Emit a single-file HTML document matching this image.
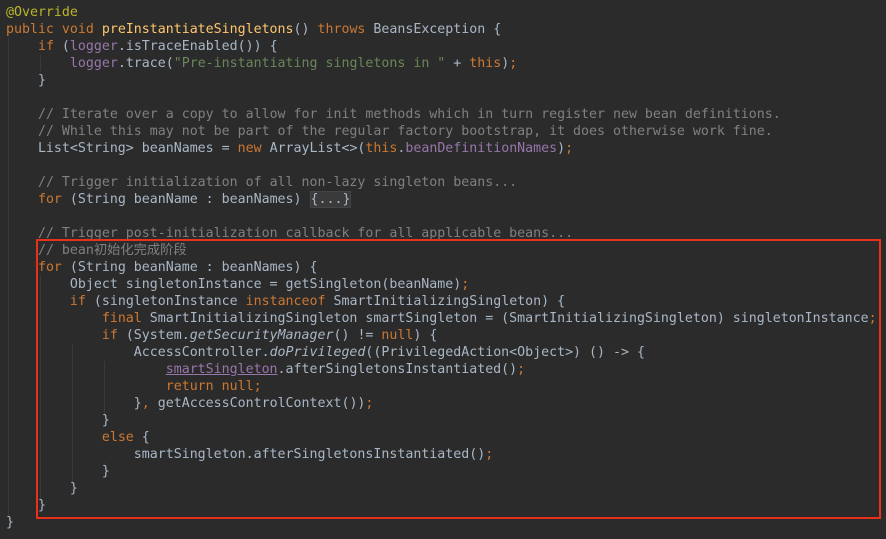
<!DOCTYPE html>
<html><head><meta charset="utf-8"><style>
html,body{margin:0;padding:0;background:#2b2b2b;width:886px;height:539px;overflow:hidden}
pre{margin:0;position:absolute;left:6px;top:4px;font-family:"DejaVu Sans Mono","Noto Sans CJK SC",monospace;font-size:13.28px;line-height:17px;color:#a9b7c6;white-space:pre}
.k{color:#cc7832}.a{color:#bbb529}.f{color:#9876aa}.s{color:#6a8759}.c{color:#808080}.m{color:#ffc66d}.i{font-style:italic}
.fold{background:#3a3a3a;border:1px solid #444;}
.u{text-decoration:underline}
.g{position:absolute;width:1px;background:#3a3a3a}
.box{position:absolute;left:36px;top:239px;width:841px;height:276px;border:2px solid #e8301a}
</style></head><body>
<div class="g" style="left:8px;top:38px;height:478px"></div>
<div class="g" style="left:40px;top:55px;height:16px"></div>
<div class="g" style="left:40px;top:276px;height:225px"></div>
<div class="g" style="left:72px;top:344px;height:140px"></div>
<div class="g" style="left:104px;top:361px;height:55px"></div>
<div class="g" style="left:104px;top:463px;height:4px"></div>
<pre><span class="a">@Override</span>
<span class="k">public void </span><span class="m">preInstantiateSingletons</span>() <span class="k">throws </span>BeansException {
    <span class="k">if </span>(<span class="f">logger</span>.isTraceEnabled()) {
        <span class="f">logger</span>.trace(<span class="s">"Pre-instantiating singletons in "</span> + <span class="k">this</span>)<span class="k">;</span>
    }

    <span class="c">// Iterate over a copy to allow for init methods which in turn register new bean definitions.</span>
    <span class="c">// While this may not be part of the regular factory bootstrap, it does otherwise work fine.</span>
    List&lt;String&gt; beanNames = <span class="k">new </span>ArrayList&lt;&gt;(<span class="k">this</span>.<span class="f">beanDefinitionNames</span>)<span class="k">;</span>

    <span class="c">// Trigger initialization of all non-lazy singleton beans...</span>
    <span class="k">for </span>(String beanName : beanNames) <span class="fold">{...}</span>

    <span class="c">// Trigger post-initialization callback for all applicable beans...</span>
    <span class="c">// bean初始化完成阶段</span>
    <span class="k">for </span>(String beanName : beanNames) {
        Object singletonInstance = getSingleton(beanName)<span class="k">;</span>
        <span class="k">if </span>(singletonInstance <span class="k">instanceof </span>SmartInitializingSingleton) {
            <span class="k">final </span>SmartInitializingSingleton smartSingleton = (SmartInitializingSingleton) singletonInstance<span class="k">;</span>
            <span class="k">if </span>(System.<span class="i">getSecurityManager</span>() != <span class="k">null</span>) {
                AccessController.<span class="i">doPrivileged</span>((PrivilegedAction&lt;Object&gt;) () -&gt; {
                    <span class="f u">smartSingleton</span>.afterSingletonsInstantiated()<span class="k">;</span>
                    <span class="k">return null;</span>
                }<span class="k">, </span>getAccessControlContext())<span class="k">;</span>
            }
            <span class="k">else </span>{
                smartSingleton.afterSingletonsInstantiated()<span class="k">;</span>
            }
        }
    }
}</pre>
<div class="box"></div>
</body></html>
